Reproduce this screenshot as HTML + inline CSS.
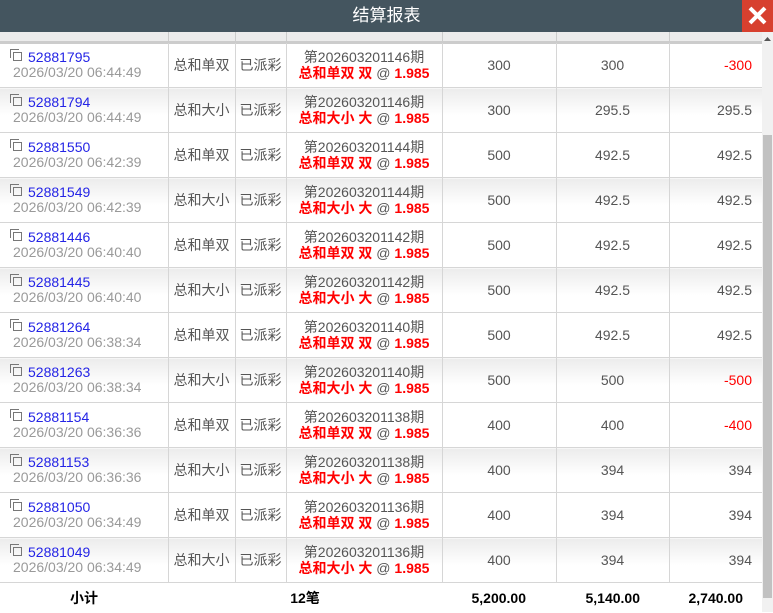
<!DOCTYPE html>
<html><head><meta charset="utf-8"><style>
body{margin:0;width:773px;height:612px;overflow:hidden;background:#fff;font-family:"Liberation Sans","Noto Sans CJK SC",sans-serif;position:relative}
.hd{position:absolute;left:0;top:0;width:773px;height:32px;background:#44555f;color:#fff;font-size:17px;text-align:center;line-height:32px}
.x{position:absolute;right:0;top:0;width:31px;height:32px;background:#d7402f}
.th{position:absolute;left:0;top:32px;width:762px;height:9px;background:#ececec;border-bottom:3px solid #ccc}
.th i{position:absolute;top:0;height:9px;border-left:1px solid #ccc}
table{position:absolute;left:0;top:43px;width:762px;border-collapse:collapse;table-layout:fixed}
td{height:44px;border:1px solid #d6d6d6;border-top:0;padding:0;font-size:14px;color:#555;text-align:center;white-space:nowrap;overflow:hidden}
tr.e td{background:linear-gradient(#ececec,#fff 60%)}
td.a{text-align:left;padding-left:13px;line-height:15px}
.ic{display:inline-block;width:7px;height:7px;border:1px solid #777;position:relative;margin-right:6px;vertical-align:1px}
.ic:before{content:"";position:absolute;left:-4px;top:-4px;width:8px;height:8px;border-left:1px solid #777;border-top:1px solid #777}
.b{color:#2424e6}.d{color:#999}
td.p{line-height:16px}
.r{color:#f00;font-weight:bold}
td.n{text-align:right;padding-right:10px}
.neg{color:#f00}
td.l{border-left:0}td.rr{border-right:0}
tfoot td{border:0;height:30px;font-weight:bold;color:#000;font-size:14px;background:#fff}
.sb{position:absolute;left:762px;top:32px;width:11px;height:580px;background:#f1f1f1}
.th2{position:absolute;left:763px;top:135px;width:9px;height:463px;background:#c1c1c1}
</style></head><body>
<div class="hd">结算报表</div>
<div class="x"><svg width="31" height="32"><path d="M8 8L23 23M23 8L8 23" stroke="#fff" stroke-width="4"/></svg></div>
<div class="th"><i style="left:168px"></i><i style="left:235px"></i><i style="left:286px"></i><i style="left:442px"></i><i style="left:556px"></i><i style="left:669px"></i></div>
<table>
<colgroup><col style="width:168px"><col style="width:67px"><col style="width:51px"><col style="width:156px"><col style="width:114px"><col style="width:113px"><col style="width:93px"></colgroup>
<tbody>
<tr><td class="a l"><span class="ic"></span><span class="b">52881795</span><br><span class="d">2026/03/20 06:44:49</span></td><td>总和单双</td><td>已派彩</td><td class="p">第202603201146期<br><span class="r">总和单双 双</span> @ <span class="r">1.985</span></td><td>300</td><td>300</td><td class="n rr neg">-300</td></tr>
<tr class="e"><td class="a l"><span class="ic"></span><span class="b">52881794</span><br><span class="d">2026/03/20 06:44:49</span></td><td>总和大小</td><td>已派彩</td><td class="p">第202603201146期<br><span class="r">总和大小 大</span> @ <span class="r">1.985</span></td><td>300</td><td>295.5</td><td class="n rr">295.5</td></tr>
<tr><td class="a l"><span class="ic"></span><span class="b">52881550</span><br><span class="d">2026/03/20 06:42:39</span></td><td>总和单双</td><td>已派彩</td><td class="p">第202603201144期<br><span class="r">总和单双 双</span> @ <span class="r">1.985</span></td><td>500</td><td>492.5</td><td class="n rr">492.5</td></tr>
<tr class="e"><td class="a l"><span class="ic"></span><span class="b">52881549</span><br><span class="d">2026/03/20 06:42:39</span></td><td>总和大小</td><td>已派彩</td><td class="p">第202603201144期<br><span class="r">总和大小 大</span> @ <span class="r">1.985</span></td><td>500</td><td>492.5</td><td class="n rr">492.5</td></tr>
<tr><td class="a l"><span class="ic"></span><span class="b">52881446</span><br><span class="d">2026/03/20 06:40:40</span></td><td>总和单双</td><td>已派彩</td><td class="p">第202603201142期<br><span class="r">总和单双 双</span> @ <span class="r">1.985</span></td><td>500</td><td>492.5</td><td class="n rr">492.5</td></tr>
<tr class="e"><td class="a l"><span class="ic"></span><span class="b">52881445</span><br><span class="d">2026/03/20 06:40:40</span></td><td>总和大小</td><td>已派彩</td><td class="p">第202603201142期<br><span class="r">总和大小 大</span> @ <span class="r">1.985</span></td><td>500</td><td>492.5</td><td class="n rr">492.5</td></tr>
<tr><td class="a l"><span class="ic"></span><span class="b">52881264</span><br><span class="d">2026/03/20 06:38:34</span></td><td>总和单双</td><td>已派彩</td><td class="p">第202603201140期<br><span class="r">总和单双 双</span> @ <span class="r">1.985</span></td><td>500</td><td>492.5</td><td class="n rr">492.5</td></tr>
<tr class="e"><td class="a l"><span class="ic"></span><span class="b">52881263</span><br><span class="d">2026/03/20 06:38:34</span></td><td>总和大小</td><td>已派彩</td><td class="p">第202603201140期<br><span class="r">总和大小 大</span> @ <span class="r">1.985</span></td><td>500</td><td>500</td><td class="n rr neg">-500</td></tr>
<tr><td class="a l"><span class="ic"></span><span class="b">52881154</span><br><span class="d">2026/03/20 06:36:36</span></td><td>总和单双</td><td>已派彩</td><td class="p">第202603201138期<br><span class="r">总和单双 双</span> @ <span class="r">1.985</span></td><td>400</td><td>400</td><td class="n rr neg">-400</td></tr>
<tr class="e"><td class="a l"><span class="ic"></span><span class="b">52881153</span><br><span class="d">2026/03/20 06:36:36</span></td><td>总和大小</td><td>已派彩</td><td class="p">第202603201138期<br><span class="r">总和大小 大</span> @ <span class="r">1.985</span></td><td>400</td><td>394</td><td class="n rr">394</td></tr>
<tr><td class="a l"><span class="ic"></span><span class="b">52881050</span><br><span class="d">2026/03/20 06:34:49</span></td><td>总和单双</td><td>已派彩</td><td class="p">第202603201136期<br><span class="r">总和单双 双</span> @ <span class="r">1.985</span></td><td>400</td><td>394</td><td class="n rr">394</td></tr>
<tr class="e"><td class="a l"><span class="ic"></span><span class="b">52881049</span><br><span class="d">2026/03/20 06:34:49</span></td><td>总和大小</td><td>已派彩</td><td class="p">第202603201136期<br><span class="r">总和大小 大</span> @ <span class="r">1.985</span></td><td>400</td><td>394</td><td class="n rr">394</td></tr>
</tbody>
<tfoot><tr><td>小计</td><td colspan="3">12笔</td><td style="text-align:right;padding-right:30px">5,200.00</td><td style="text-align:right;padding-right:29px">5,140.00</td><td style="text-align:right;padding-right:19px">2,740.00</td></tr></tfoot>
</table>
<div class="sb"></div><div class="th2"></div>
<svg style="position:absolute;left:763px;top:36px" width="9" height="6"><path d="M1 5L4.5 1L8 5Z" fill="#555"/></svg>
</body></html>
